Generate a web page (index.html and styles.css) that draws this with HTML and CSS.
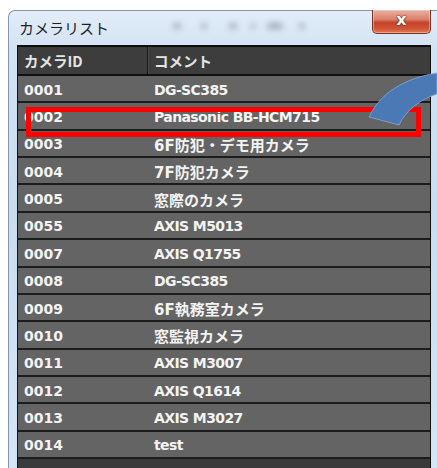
FILE: index.html
```html
<!DOCTYPE html>
<html lang="ja">
<head>
<meta charset="utf-8">
<title>カメラリスト</title>
<link rel="stylesheet" href="styles.css">
</head>
<body>
<div class="window">
  <div class="titlebar">
    <span class="title">カメラリスト</span>
    <span class="glass">
      <i class="blob b1"></i><i class="blob b2"></i><i class="blob b3"></i><i class="blob b4"></i><i class="blob b5"></i><i class="blob b6"></i>
    </span>
    <button class="close" type="button">x</button>
  </div>
  <div class="list">
    <div class="row head">
      <div class="cell id">カメラID</div>
      <div class="cell comment">コメント</div>
    </div>
    <div class="rows">
      <div class="row"><div class="cell id">0001</div><div class="cell comment">DG-SC385</div></div>
      <div class="row"><div class="cell id">0002</div><div class="cell comment">Panasonic BB-HCM715</div></div>
      <div class="row"><div class="cell id">0003</div><div class="cell comment ja">6F防犯・デモ用カメラ</div></div>
      <div class="row"><div class="cell id">0004</div><div class="cell comment ja">7F防犯カメラ</div></div>
      <div class="row"><div class="cell id">0005</div><div class="cell comment ja">窓際のカメラ</div></div>
      <div class="row"><div class="cell id">0055</div><div class="cell comment">AXIS M5013</div></div>
      <div class="row"><div class="cell id">0007</div><div class="cell comment">AXIS Q1755</div></div>
      <div class="row"><div class="cell id">0008</div><div class="cell comment">DG-SC385</div></div>
      <div class="row"><div class="cell id">0009</div><div class="cell comment ja">6F執務室カメラ</div></div>
      <div class="row"><div class="cell id">0010</div><div class="cell comment ja">窓監視カメラ</div></div>
      <div class="row"><div class="cell id">0011</div><div class="cell comment">AXIS M3007</div></div>
      <div class="row"><div class="cell id">0012</div><div class="cell comment">AXIS Q1614</div></div>
      <div class="row"><div class="cell id">0013</div><div class="cell comment">AXIS M3027</div></div>
      <div class="row"><div class="cell id">0014</div><div class="cell comment">test</div></div>
    </div>
  </div>
</div>

<!-- callout: highlighted row and pointer -->
<div class="highlight"></div>
<svg class="pointer" width="80" height="70" viewBox="360 60 80 70" aria-hidden="true">
  <path d="M369,117 C377,100 395,80 437,73 L437,94 C421,99 406,110 399,125 Z" fill="#4b79b6" stroke="#86a9d6" stroke-width="0.8"/>
</svg>
</body>
</html>
```
FILE: styles.css
```css
html, body {
  margin: 0;
  padding: 0;
}
body {
  position: relative;
  width: 437px;
  height: 468px;
  overflow: hidden;
  background: #ffffff;
  font-family: "DejaVu Sans", "Noto Sans CJK JP", sans-serif;
}

.window {
  margin: 10px 0 0 8px;
  width: 429px;
  height: 470px;
  box-sizing: border-box;
  border-left: 1px solid #8496ad;
  border-top: 1px solid #8496ad;
  border-top-left-radius: 7px;
  background: linear-gradient(180deg, #e2edf9 0px, #d2e2f3 40px, #cadcf0 200px, #d6e5f5 468px);
  padding-left: 8px;
  display: flex;
  flex-direction: column;
}

.titlebar {
  height: 34px;
  display: flex;
  align-items: flex-start;
  padding-right: 6px;
  position: relative;
}
.title {
  margin: 8px 0 0 2px;
  font-family: "Noto Sans CJK JP", sans-serif;
  font-size: 15px;
  line-height: 18px;
  color: #1e1e1e;
}

.glass {
  flex: 1;
  display: flex;
  align-items: center;
  height: 30px;
  filter: blur(3px);
  opacity: 0.55;
}
.blob {
  display: block;
  height: 6px;
  background: #6d7684;
  border-radius: 3px;
}
.b1 { width: 8px; margin-left: 64px; }
.b2 { width: 6px; margin-left: 20px; }
.b3 { width: 8px; margin-left: 22px; }
.b4 { width: 4px; margin-left: 14px; }
.b5 { width: 16px; margin-left: 12px; }
.b6 { width: 6px; margin-left: 16px; }

.close {
  margin-top: -1px;
  width: 59px;
  height: 24px;
  border: 1px solid #7b3326;
  border-top: none;
  border-radius: 0 0 5px 5px;
  background: linear-gradient(180deg, #eab0a2 0%, #d9826c 40%, #c7432a 55%, #cf5437 80%, #e07a55 100%);
  box-shadow: inset 0 0 0 1px rgba(255, 220, 210, 0.45);
  color: #ffffff;
  font-family: "DejaVu Sans", sans-serif;
  font-weight: bold;
  font-size: 16px;
  line-height: 18px;
  padding: 0 0 4px 0;
  text-shadow: 0 0 2px #5a1a10, 0 0 1px #5a1a10;
}

.list {
  flex: 1;
  width: 414px;
  box-sizing: border-box;
  border: 1px solid #111111;
  border-bottom: none;
  background: #3a3a3a;
  display: flex;
  flex-direction: column;
}

.row {
  display: grid;
  grid-template-columns: 130px 1fr;
  box-sizing: border-box;
  border-bottom: 2px solid #1c1c1c;
  background: #646464;
  color: #f3f3f3;
  font-weight: bold;
  font-size: 14px;
}
.row.head {
  height: 30px;
  background: #3d3d3d;
  border-top: 1px solid #0c0c0c;
  border-bottom: 2px solid #0e0e0e;
  color: #e4e4e4;
  font-family: "Noto Sans CJK JP", sans-serif;
  font-size: 14.5px;
}
.row.head .id {
  border-right: 1px solid #1a1a1a;
  box-shadow: 1px 0 0 #4c4c4c;
}
.rows {
  height: 383px;
  display: grid;
  grid-template-rows: repeat(14, 1fr);
}
.cell {
  display: flex;
  align-items: center;
  padding: 2px 0 0 6px;
  white-space: nowrap;
}
.comment {
  letter-spacing: -0.6px;
}
.comment.ja {
  font-size: 15px;
  letter-spacing: 0;
}
.head .cell {
  padding-top: 0;
  letter-spacing: 0;
}

.highlight {
  position: absolute;
  left: 26px;
  top: 107px;
  width: 395px;
  height: 30px;
  box-sizing: border-box;
  border: 5px solid #ff0000;
}
.pointer {
  position: absolute;
  left: 360px;
  top: 60px;
}
```
